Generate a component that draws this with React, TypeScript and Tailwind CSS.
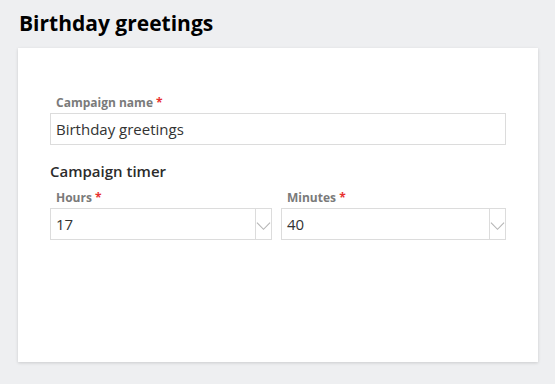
import { ReactNode } from "react";

const Label = ({ children }: { children: ReactNode }) => (
    <div className="pl-[6px] text-[12px] font-bold leading-[14px] text-[#7a7a7a]">
        {children} <span className="text-[#e8312f]">*</span>
    </div>
);

const Chevron = () => (
    <svg width="16" height="10" viewBox="0 0 16 10" fill="none">
        <path d="M1 1.5 L8 8.5 L15 1.5" stroke="#b5b5b5" strokeWidth="1.2" />
    </svg>
);

const Select = ({ label, value, className }: { label: string; value: string; className: string }) => (
    <div className={className}>
        <Label>{label}</Label>
        <div className="mt-[3px] flex h-[32px] border border-[#dcdcdc] bg-white">
            <div className="flex flex-1 items-center pl-[5px] text-[15px] text-[#333]">{value}</div>
            <div className="flex w-[16px] items-center justify-center border-l border-[#dcdcdc] pt-[4px]">
                <Chevron />
            </div>
        </div>
    </div>
);

export default function App() {
    return (
        <div
            className="min-h-[384px] bg-[#eeeff1] px-[18px] pt-[9px]"
            style={{ fontFamily: '"Open Sans", sans-serif' }}
        >
            <h1 className="pl-px text-[21px] font-bold leading-[28px] text-black">Birthday greetings</h1>
            <div className="mt-[11px] h-[314px] w-[520px] bg-white px-[32px] pt-[48px] shadow-[0_1px_3px_rgba(0,0,0,0.15)]">
                <Label>Campaign name</Label>
                <div className="mt-[3px] flex h-[32px] items-center border border-[#dcdcdc] pl-[5px] text-[15px] text-[#333]">
                    Birthday greetings
                </div>
                <div className="mt-[16px] text-[15px] font-semibold leading-[20px] text-[#2b2b2b]">Campaign timer</div>
                <div className="mt-[10px] flex gap-[9px]">
                    <Select className="w-[222px]" label="Hours" value="17" />
                    <Select className="flex-1" label="Minutes" value="40" />
                </div>
            </div>
        </div>
    );
}
